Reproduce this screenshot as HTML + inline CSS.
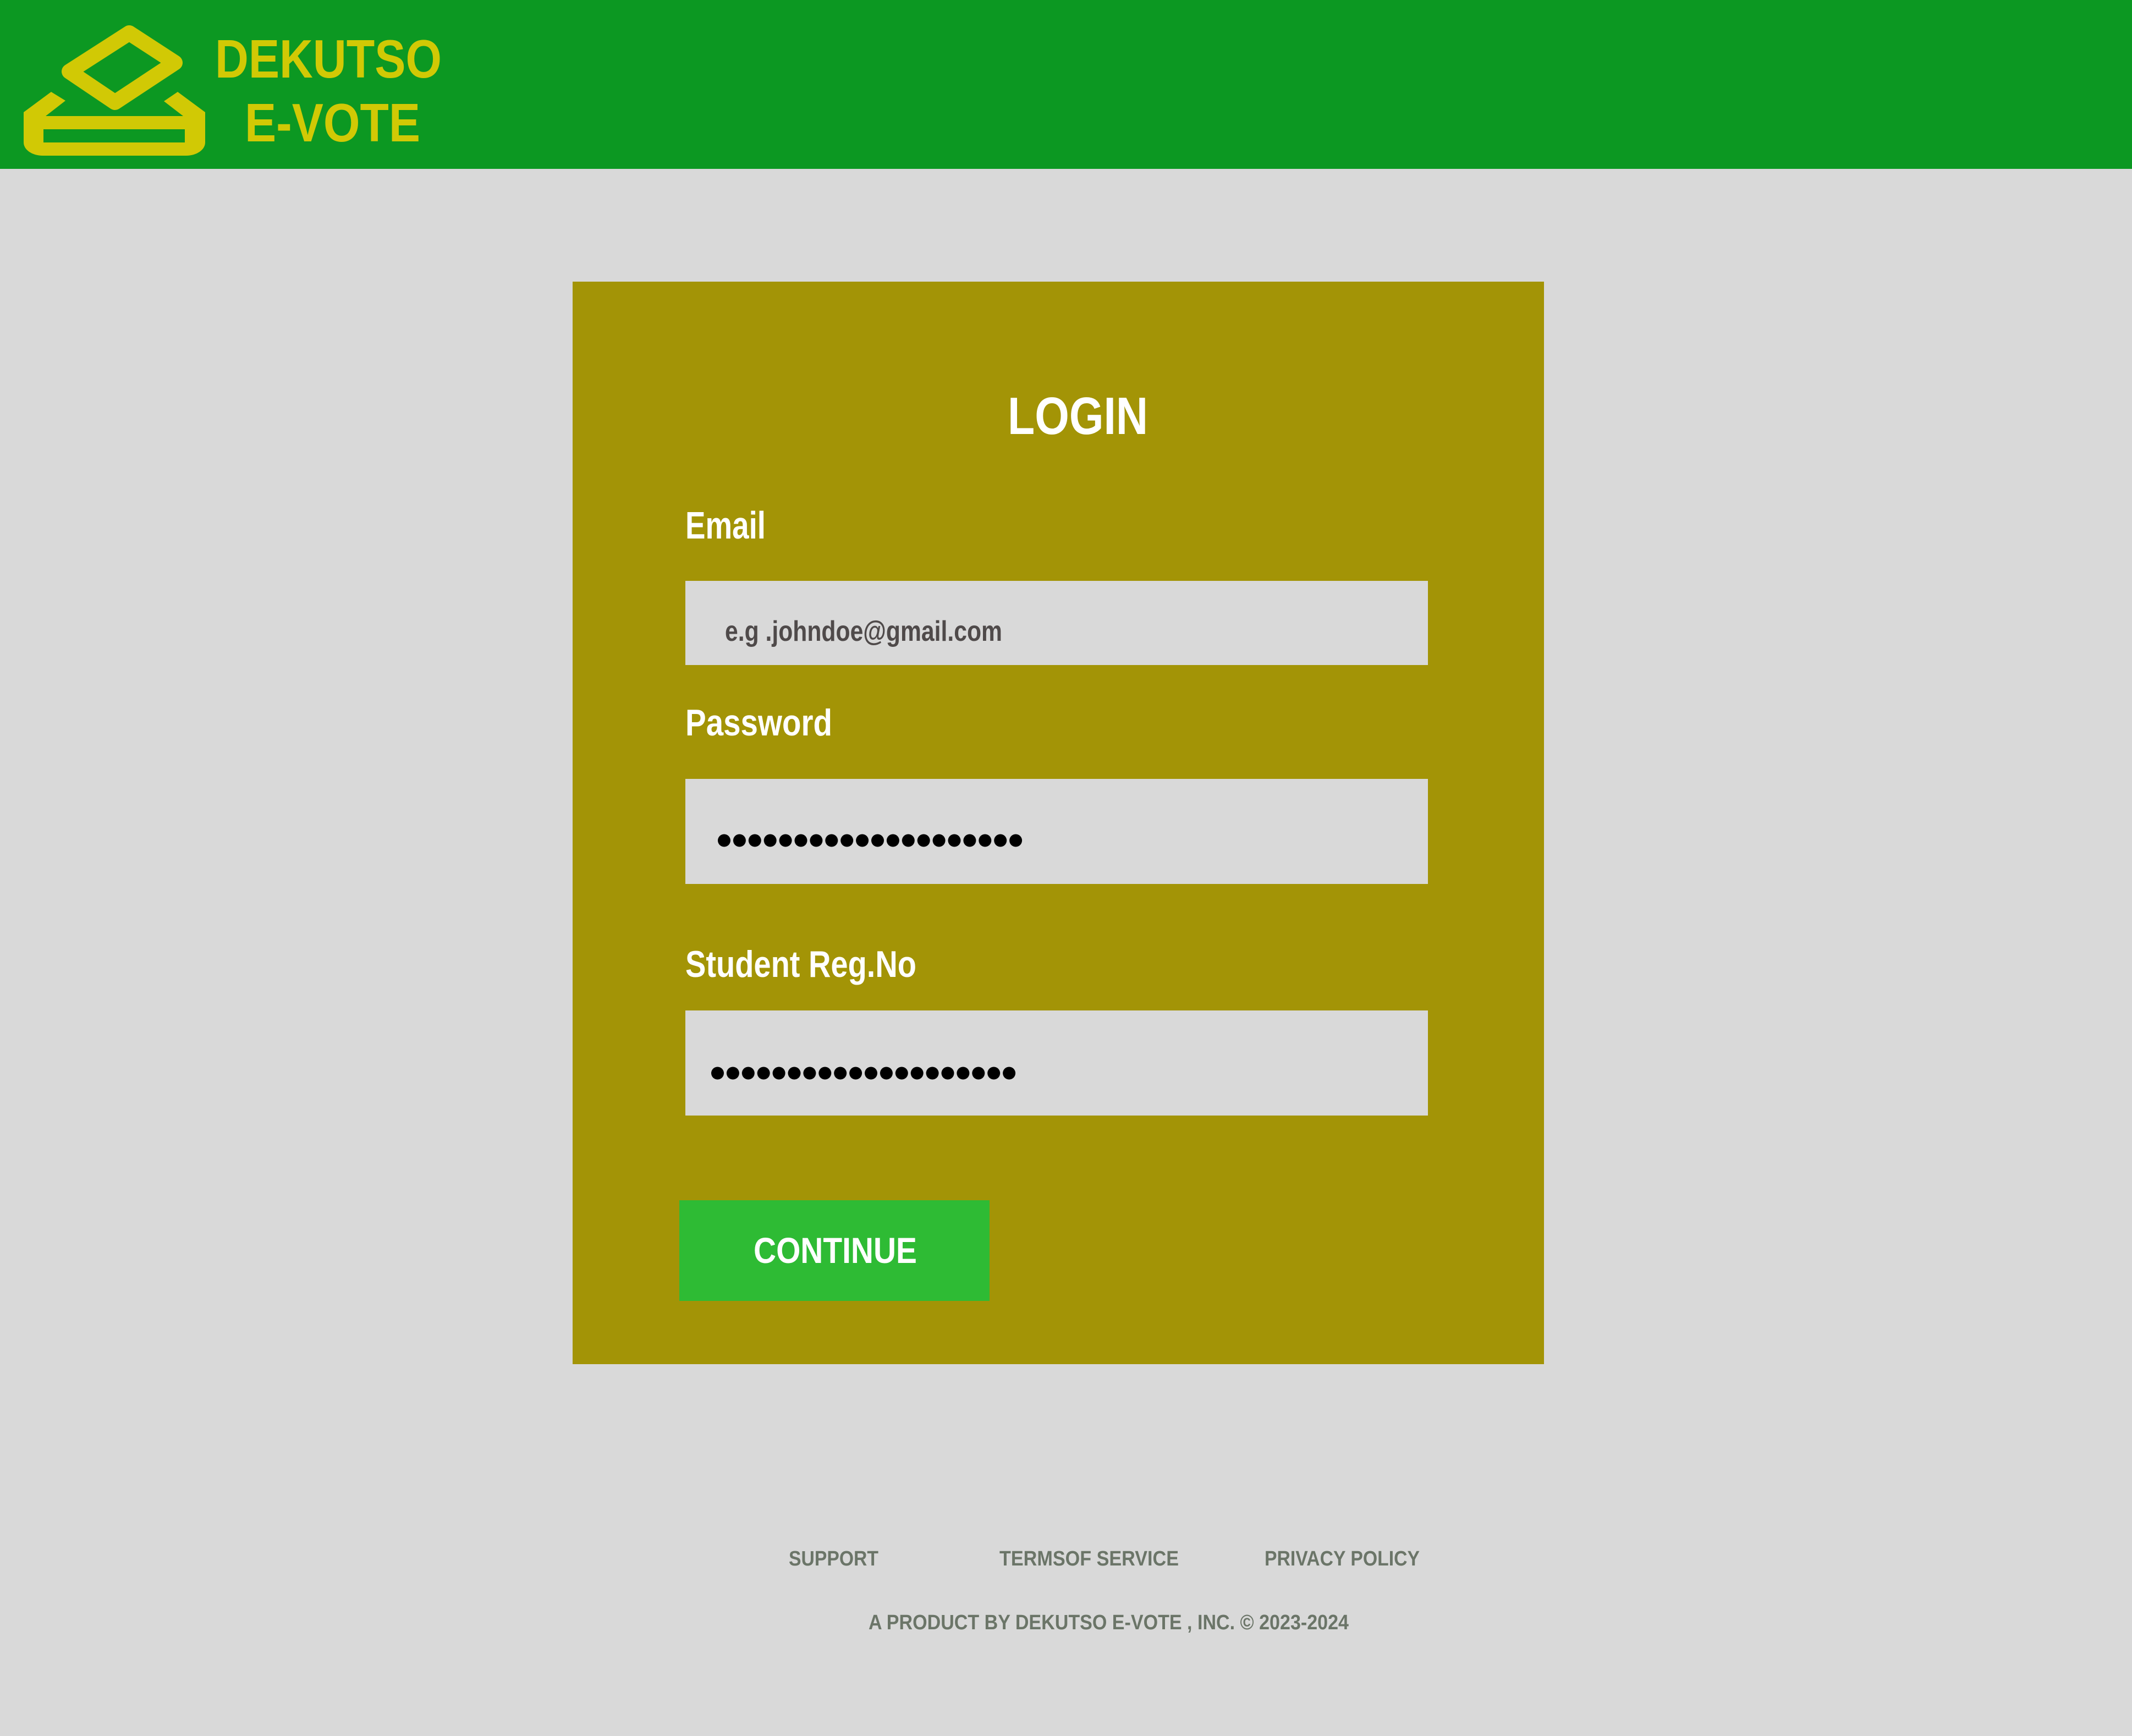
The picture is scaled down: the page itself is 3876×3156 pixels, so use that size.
<!DOCTYPE html>
<html><head><meta charset="utf-8"><style>
html,body{margin:0;padding:0;}
body{width:3876px;height:3156px;background:#d9d9d9;position:relative;overflow:hidden;}
</style></head><body>
<svg width="3876" height="3156" viewBox="0 0 3876 3156" style="position:absolute;left:0;top:0" font-family="'Liberation Sans', sans-serif" font-weight="bold">
<defs>
<pattern id="dots" x="0" y="0" width="27.9" height="40" patternUnits="userSpaceOnUse">
<ellipse cx="11.5" cy="20" rx="11.5" ry="11.5" fill="#000"/>
</pattern>
</defs>
<rect x="0" y="0" width="3876" height="307" fill="#0c9822"/>
<!-- logo icon -->
<polygon points="235,60 318,114 209,186 126,130" fill="none" stroke="#d1c905" stroke-width="28" stroke-linejoin="round"/>
<path fill-rule="evenodd" fill="#d1c905" d="M93,167 L43,204 L43,259 C43,272 58,283 78,283 L338,283 C358,283 373,272 373,259 L373,204 L323,167 L298,184 L333,211 L83,211 L119,183 Z M79,235 L336,235 L336,259 L79,259 Z"/>
<text x="391" y="141" font-size="98" fill="#d1c905" textLength="412" lengthAdjust="spacingAndGlyphs">DEKUTSO</text>
<text x="445" y="257" font-size="98" fill="#d1c905" textLength="319" lengthAdjust="spacingAndGlyphs">E-VOTE</text>
<!-- card -->
<rect x="1041" y="512" width="1766" height="1968" fill="#a39406"/>
<text x="1832" y="789" font-size="96" fill="#fff" textLength="255" lengthAdjust="spacingAndGlyphs">LOGIN</text>
<text x="1246" y="979" font-size="70" fill="#fff" textLength="146" lengthAdjust="spacingAndGlyphs">Email</text>
<rect x="1246" y="1056" width="1350" height="153" fill="#d9d9d9"/>
<text x="1318" y="1165" font-size="52" fill="#4f4a4a" textLength="504" lengthAdjust="spacingAndGlyphs">e.g .johndoe@gmail.com</text>
<text x="1246" y="1337" font-size="68" fill="#fff" textLength="267" lengthAdjust="spacingAndGlyphs">Password</text>
<rect x="1246" y="1416" width="1350" height="191" fill="#d9d9d9"/>
<g transform="translate(1305,1508)"><rect x="0" y="0" width="558" height="40" fill="url(#dots)"/></g>
<text x="1246" y="1776" font-size="68" fill="#fff" textLength="420" lengthAdjust="spacingAndGlyphs">Student Reg.No</text>
<rect x="1246" y="1837" width="1350" height="191" fill="#d9d9d9"/>
<g transform="translate(1293,1931)"><rect x="0" y="0" width="558" height="40" fill="url(#dots)"/></g>
<rect x="1235" y="2182" width="564" height="183" fill="#2ebb34"/>
<text x="1370" y="2296" font-size="66" fill="#fff" textLength="297" lengthAdjust="spacingAndGlyphs">CONTINUE</text>
<!-- footer -->
<g fill="#6b7568" font-size="38">
<text x="1434" y="2846" textLength="163" lengthAdjust="spacingAndGlyphs">SUPPORT</text>
<text x="1817" y="2846" textLength="326" lengthAdjust="spacingAndGlyphs">TERMSOF SERVICE</text>
<text x="2299" y="2846" textLength="282" lengthAdjust="spacingAndGlyphs">PRIVACY POLICY</text>
<text x="1579" y="2962" textLength="873" lengthAdjust="spacingAndGlyphs">A PRODUCT BY DEKUTSO E-VOTE , INC. © 2023-2024</text>
</g>
</svg>
</body></html>
